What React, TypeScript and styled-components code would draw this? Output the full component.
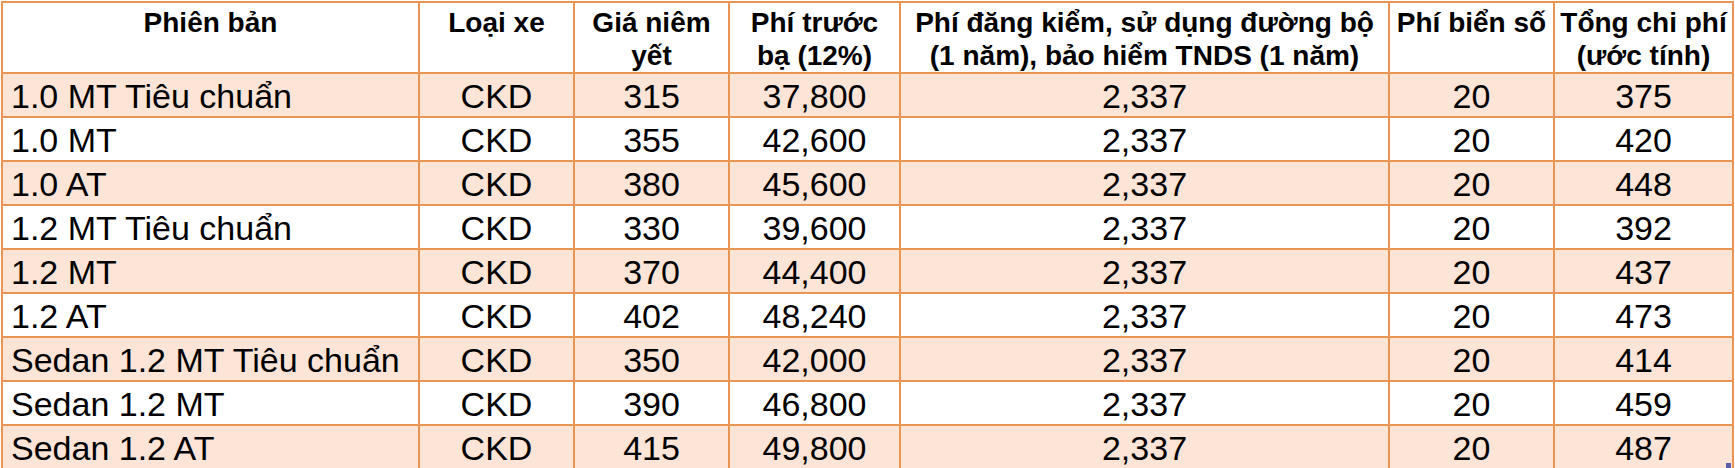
import styled, { createGlobalStyle } from "styled-components";

const GlobalStyle = createGlobalStyle`
  html, body {
    margin: 0;
    padding: 0;
    background: #ffffff;
  }
  body {
    font-family: "Liberation Sans", Arial, sans-serif;
    color: #000000;
  }
`;

type Row = {
  name: string;
  type: string;
  price: string;
  tax: string;
  fee: string;
  plate: string;
  total: string;
};

const rows: Row[] = [
  { name: "1.0 MT Tiêu chuẩn", type: "CKD", price: "315", tax: "37,800", fee: "2,337", plate: "20", total: "375" },
  { name: "1.0 MT", type: "CKD", price: "355", tax: "42,600", fee: "2,337", plate: "20", total: "420" },
  { name: "1.0 AT", type: "CKD", price: "380", tax: "45,600", fee: "2,337", plate: "20", total: "448" },
  { name: "1.2 MT Tiêu chuẩn", type: "CKD", price: "330", tax: "39,600", fee: "2,337", plate: "20", total: "392" },
  { name: "1.2 MT", type: "CKD", price: "370", tax: "44,400", fee: "2,337", plate: "20", total: "437" },
  { name: "1.2 AT", type: "CKD", price: "402", tax: "48,240", fee: "2,337", plate: "20", total: "473" },
  { name: "Sedan 1.2 MT Tiêu chuẩn", type: "CKD", price: "350", tax: "42,000", fee: "2,337", plate: "20", total: "414" },
  { name: "Sedan 1.2 MT", type: "CKD", price: "390", tax: "46,800", fee: "2,337", plate: "20", total: "459" },
  { name: "Sedan 1.2 AT", type: "CKD", price: "415", tax: "49,800", fee: "2,337", plate: "20", total: "487" },
];

const widths = [417, 155, 155, 171, 489, 165, 179];

export default function App() {
  return (
    <>
      <GlobalStyle />
      <Sheet>
        <PriceTable>
          <colgroup>
            {widths.map((w, i) => (
              <col key={i} style={{ width: w }} />
            ))}
          </colgroup>
          <thead>
            <HeadRow>
              <HeadCell>Phiên bản</HeadCell>
              <HeadCell>Loại xe</HeadCell>
              <HeadCell>
                Giá niêm
                <br />
                yết
              </HeadCell>
              <HeadCell>
                Phí trước
                <br />
                bạ (12%)
              </HeadCell>
              <HeadCell>
                Phí đăng kiểm, sử dụng đường bộ
                <br />
                (1 năm), bảo hiểm TNDS (1 năm)
              </HeadCell>
              <HeadCell>Phí biển số</HeadCell>
              <HeadCell>
                Tổng chi phí
                <br />
                (ước tính)
              </HeadCell>
            </HeadRow>
          </thead>
          <tbody>
            {rows.map((r, i) => (
              <BodyRow key={r.name} $shaded={i % 2 === 0}>
                <Cell $left>{r.name}</Cell>
                <Cell>{r.type}</Cell>
                <Cell>{r.price}</Cell>
                <Cell>{r.tax}</Cell>
                <Cell>{r.fee}</Cell>
                <Cell>{r.plate}</Cell>
                <Cell>{r.total}</Cell>
              </BodyRow>
            ))}
          </tbody>
        </PriceTable>
        <FillHandle />
      </Sheet>
    </>
  );
}

const Sheet = styled.div`
  position: relative;
  width: 1735px;
  padding: 1px 0 0 1px;
  box-sizing: border-box;
`;

const PriceTable = styled.table`
  border-collapse: collapse;
  table-layout: fixed;
  width: 1731px;
`;

const HeadRow = styled.tr`
  height: 69px;
  background: #ffffff;
`;

const HeadCell = styled.th`
  border: 2px solid #eb9555;
  padding: 3px 2px 0;
  vertical-align: top;
  text-align: center;
  font-size: 28px;
  line-height: 33px;
  font-weight: 700;
  white-space: nowrap;
  overflow: hidden;
`;

const BodyRow = styled.tr<{ $shaded: boolean }>`
  height: 44px;
  background: ${(p) => (p.$shaded ? "#fce4d6" : "#ffffff")};
`;

const Cell = styled.td<{ $left?: boolean }>`
  border: 2px solid #eb9555;
  padding: 0 ${(p) => (p.$left ? "8px" : "2px")};
  vertical-align: bottom;
  text-align: ${(p) => (p.$left ? "left" : "center")};
  font-size: 34px;
  line-height: 39px;
  white-space: nowrap;
  overflow: hidden;
`;

const FillHandle = styled.div`
  position: absolute;
  right: 4px;
  bottom: 2px;
  width: 5px;
  height: 5px;
  background: #5a5fa8;
`;
